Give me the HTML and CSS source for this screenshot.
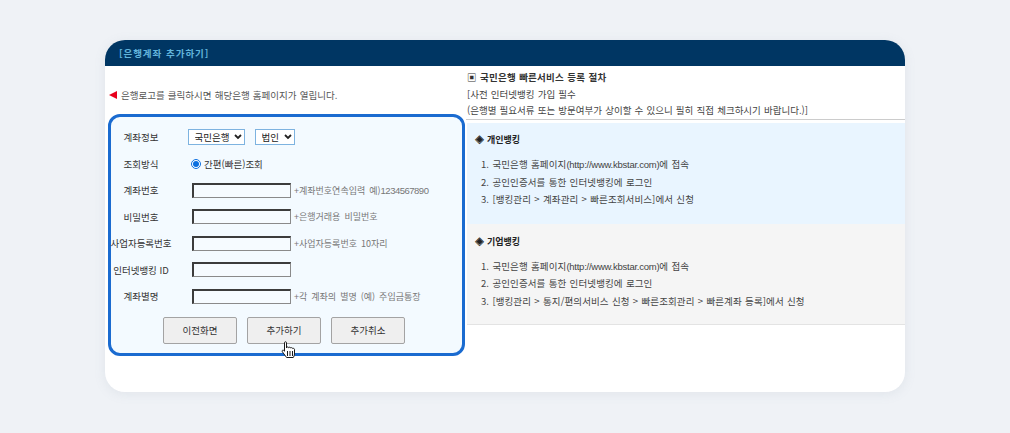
FILE: index.html
```html
<!DOCTYPE html>
<html lang="ko">
<head>
<meta charset="utf-8">
<title>은행계좌 추가하기</title>
<link rel="stylesheet" href="styles.css">
</head>
<body>
<main class="card">
  <header class="card-head">[은행계좌 추가하기]</header>
  <div class="card-body">
    <section class="left">
      <p class="note"><span class="tri"></span>은행로고를 클릭하시면 해당은행 홈페이지가 열립니다.</p>
      <form class="form">
        <div class="row">
          <span class="label">계좌정보</span>
          <div class="field">
            <select class="sel sel-bank"><option>국민은행</option></select>
            <select class="sel sel-type"><option>법인</option></select>
          </div>
        </div>
        <div class="row">
          <span class="label">조회방식</span>
          <div class="field radio-field">
            <input class="radio" type="radio" checked><span class="radio-text">간편(빠른)조회</span>
          </div>
        </div>
        <div class="row">
          <span class="label">계좌번호</span>
          <div class="field"><input class="inp" type="text"><span class="hint">+계좌번호연속입력 예)<span class="latin">1234567890</span></span></div>
        </div>
        <div class="row">
          <span class="label">비밀번호</span>
          <div class="field"><input class="inp" type="text"><span class="hint">+은행거래용 비밀번호</span></div>
        </div>
        <div class="row">
          <span class="label">사업자등록번호</span>
          <div class="field"><input class="inp" type="text"><span class="hint">+사업자등록번호 10자리</span></div>
        </div>
        <div class="row">
          <span class="label">인터넷뱅킹 ID</span>
          <div class="field"><input class="inp" type="text"></div>
        </div>
        <div class="row">
          <span class="label">계좌별명</span>
          <div class="field"><input class="inp" type="text"><span class="hint">+각 계좌의 별명 (예) 주입금통장</span></div>
        </div>
        <div class="buttons">
          <button class="btn" type="button">이전화면</button>
          <button class="btn" type="button">추가하기</button>
          <button class="btn" type="button">추가취소</button>
        </div>
        <svg class="cursor" width="16" height="19" viewBox="0 0 16 19" aria-hidden="true">
          <path d="M3.500 1.600c0-1.100 2-1.100 2 0V7l.3-.6c.4-.7 1.800-.6 1.900.3.4-.7 1.800-.6 2 .3.5-.6 1.900-.4 2 .5.5-.3 1.700-.2 1.800.9v4.600c0 1.500-.6 2.500-1.200 3.500H5.600L1.500 11c-.8-1-.2-2.200 1-1.700l1 .9z" fill="#fff" stroke="#1a1a1a" stroke-width="1" stroke-linejoin="round"/>
          <path d="M6.500 10v5M9 10v5M11.500 10v5" stroke="#1a1a1a" stroke-width="1" fill="none"/>
        </svg>
      </form>
    </section>
    <section class="right">
      <div class="intro">
        <p class="intro-title">▣ 국민은행 빠른서비스 등록 절차</p>
        <p class="intro-line">[사전 인터넷뱅킹 가입 필수</p>
        <p class="intro-line">(은행별 필요서류 또는 방문여부가 상이할 수 있으니 필히 직접 체크하시기 바랍니다.)]</p>
      </div>
      <div class="panel panel-blue">
        <h3 class="panel-title">◈ 개인뱅킹</h3>
        <ol class="steps">
          <li>1. 국민은행 홈페이지<span class="latin">(http://www.kbstar.com)</span>에 접속</li>
          <li>2. 공인인증서를 통한 인터넷뱅킹에 로그인</li>
          <li>3. [뱅킹관리 &gt; 계좌관리 &gt; 빠른조회서비스]에서 신청</li>
        </ol>
      </div>
      <div class="panel panel-gray">
        <h3 class="panel-title">◈ 기업뱅킹</h3>
        <ol class="steps">
          <li>1. 국민은행 홈페이지<span class="latin">(http://www.kbstar.com)</span>에 접속</li>
          <li>2. 공인인증서를 통한 인터넷뱅킹에 로그인</li>
          <li>3. [뱅킹관리 &gt; 통지/편의서비스 신청 &gt; 빠른조회관리 &gt; 빠른계좌 등록]에서 신청</li>
        </ol>
      </div>
    </section>
  </div>
</main>
</body>
</html>
```
FILE: styles.css
```css
* { box-sizing: border-box; }
html, body { margin: 0; height: 433px; overflow: hidden; }
body {
  background: #eff2f6;
  padding: 40px 105px 41px;
  font-family: "Noto Sans CJK KR", "Noto Sans", sans-serif;
  font-size: 9.5px;
  word-spacing: .5px;
  color: #3c3c3c;
}
p, h3, ol { margin: 0; padding: 0; }
.card {
  height: 352px;
  background: #fff;
  border-radius: 20px;
  overflow: hidden;
  box-shadow: 0 2px 12px rgba(120, 140, 160, .12);
}
.card-head {
  height: 26px;
  background: #003663;
  color: #62b4dc;
  font-weight: 700;
  font-size: 9.5px;
  line-height: 26px;
  padding-left: 14px;
  letter-spacing: .9px;
}
.card-body { display: grid; grid-template-columns: 361px 439px; }
.left { padding: 0 0 0 3px; }
.note {
  display: flex;
  align-items: center;
  height: 14px;
  margin-top: 22px;
  padding-left: 1px;
  color: #555;
}
.tri {
  width: 0; height: 0;
  margin-right: 4px;
  border-style: solid;
  border-width: 4.5px 8px 4.5px 0;
  border-color: transparent #e8001c transparent transparent;
}
.form {
  position: relative;
  margin-top: 12px;
  width: 357px;
  height: 242px;
  background: #f3faff;
  border: 3px solid #1a6bd0;
  border-radius: 12px;
  padding-top: 7px;
}
.row {
  display: grid;
  grid-template-columns: 60px 1fr;
  column-gap: 17px;
  height: 26.5px;
  align-items: center;
}
.label {
  justify-self: center;
  white-space: nowrap;
  color: #333;
  word-spacing: 0;
}
.field { display: flex; align-items: center; }
.sel {
  appearance: none;
  height: 16px;
  padding: 0 0 0 5.5px;
  background: #fff url("data:image/svg+xml,%3Csvg xmlns='http://www.w3.org/2000/svg' width='8' height='6'%3E%3Cpath d='M1 1l3 3 3-3' fill='none' stroke='%23222' stroke-width='1.800'/%3E%3C/svg%3E") no-repeat right 2.5px center;
  border: 1px solid #7db3e0;
  border-radius: 0;
  font: inherit;
  color: #222;
}
.sel-bank { width: 57px; margin-right: 10px; }
.sel-type { width: 40px; }
.radio-field { padding-left: 3px; }
.radio {
  width: 10px; height: 10px;
  margin: 0 3px 0 0;
  accent-color: #0a6fe0;
}
.radio-text { color: #333; word-spacing: 0; }
.inp {
  width: 99px;
  height: 15px;
  margin-left: 4px;
  padding: 0;
  background: #f6fbff;
  border-style: solid;
  border-width: 2px 1px 1px 2px;
  border-color: #3c3c3c #8a8a8a #8a8a8a #3c3c3c;
}
.hint { margin-left: 3px; color: #777; font-size: 9px; word-spacing: 1.5px; white-space: nowrap; }
.latin { font-family: "Liberation Sans", sans-serif; font-size: 9.5px; letter-spacing: -.25px; }
.hint .latin { letter-spacing: -.5px; }
.buttons {
  display: flex;
  gap: 10px;
  margin-top: 7px;
  padding-left: 52px;
}
.btn {
  width: 74px;
  height: 27px;
  padding: 0;
  background: #efefef;
  border: 1px solid #a3a3a3;
  border-radius: 2px;
  font: inherit;
  color: #333;
}
.cursor { position: absolute; left: 170px; top: 224px; }
.intro { height: 54px; padding: 3px 0 0 1px; border-bottom: 1px solid #ccc; }
.intro-title { font-weight: 700; letter-spacing: .2px; height: 17px; line-height: 16px; color: #333; }
.intro-line { height: 16px; line-height: 16px; color: #444; white-space: nowrap; }
.panel { margin: 3px 0 0 1px; height: 101px; padding: 8px 0 0 8px; }
.panel-blue { background: #e9f5ff; }
.panel-gray { margin-top: 0; padding-top: 9px; background: #f5f5f5; border-bottom: 1px solid #e3e3e3; }
.panel-title { font-size: 9px; font-weight: 700; height: 18px; line-height: 18px; color: #222; }
.steps { list-style: none; margin-top: 7px; padding-left: 6px; letter-spacing: .1px; }
.panel-gray .steps { margin-top: 6.5px; }
.steps li { height: 17.7px; line-height: 17.7px; color: #444; white-space: nowrap; }
```
